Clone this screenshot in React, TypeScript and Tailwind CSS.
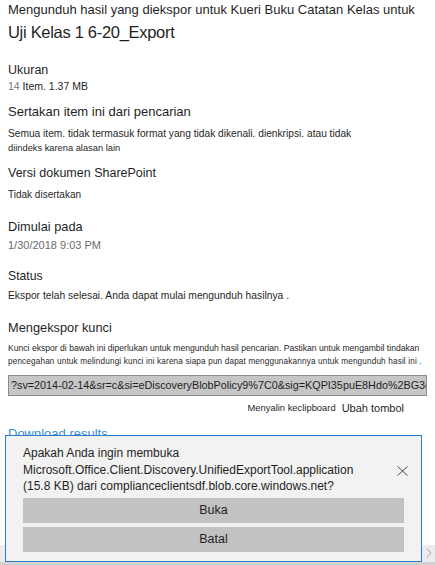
import React from "react";

const font = { fontFamily: '"Liberation Sans", Arial, sans-serif' };

type RowProps = { children: React.ReactNode; className?: string };

// One text row with a fixed height; leading equals the height so the glyphs sit centred.
function Row({ children, className = "" }: RowProps) {
  return <div className={`whitespace-nowrap text-[#1f1f1f] ${className}`}>{children}</div>;
}

export default function App() {
  return (
    <div className="relative h-[565px] w-[435px] overflow-hidden bg-white" style={font}>
      <div className="flex flex-col px-2">
        <Row className="h-[20px] text-[13px] leading-[20px]">
          Mengunduh hasil yang diekspor untuk Kueri Buku Catatan Kelas untuk
        </Row>
        <Row className="h-[24px] text-[16.5px] leading-[24px] tracking-[-0.3px]">Uji Kelas 1 6-20_Export</Row>

        <Row className="mt-[18px] h-[16px] text-[12.5px] leading-[16px]">Ukuran</Row>
        <Row className="h-[16px] text-[10.5px] leading-[16px]">
          <span className="text-[#777]">14</span> Item. 1.37 MB
        </Row>

        <Row className="mt-[10px] h-[16px] text-[13px] leading-[16px]">Sertakan item ini dari pencarian</Row>
        <Row className="mt-[7px] h-[14px] text-[10.2px] leading-[14px]">
          Semua item. tidak termasuk format yang tidak dikenali. dienkripsi. atau tidak
        </Row>
        <Row className="h-[14px] text-[9.3px] leading-[14px]">diindeks karena alasan lain</Row>

        <Row className="mt-[10px] h-[16px] text-[12.5px] leading-[16px]">Versi dokumen SharePoint</Row>
        <Row className="mt-[6px] h-[16px] text-[10px] leading-[16px]">Tidak disertakan</Row>

        <Row className="mt-[15px] h-[18px] text-[12.8px] leading-[18px]">Dimulai pada</Row>
        <Row className="mt-[1px] h-[16px] text-[11px] leading-[16px] text-[#6b6b6b]">1/30/2018 9:03 PM</Row>

        <Row className="mt-[15px] h-[16px] text-[12.2px] leading-[16px]">Status</Row>
        <Row className="mt-[4px] h-[16px] text-[10.3px] leading-[16px]">
          Ekspor telah selesai. Anda dapat mulai mengunduh hasilnya .
        </Row>

        <Row className="mt-[15px] h-[18px] text-[12.8px] leading-[18px]">Mengekspor kunci</Row>
        <Row className="mt-[4px] h-[14px] text-[8.6px] leading-[14px]">
          Kunci ekspor di bawah ini diperlukan untuk mengunduh hasil pencarian. Pastikan untuk mengambil tindakan
        </Row>
        <Row className="h-[14px] text-[8.2px] leading-[14px] tracking-[0.15px]">
          pencegahan untuk melindungi kunci ini karena siapa pun dapat menggunakannya untuk mengunduh hasil ini .
        </Row>

        <div className="mt-[6px] flex h-[21px] items-center overflow-hidden whitespace-nowrap border border-[#8c8c8c] bg-[#c6c6c6] px-[2px] text-[10.8px] text-[#1f1f1f]">
          ?sv=2014-02-14&amp;sr=c&amp;si=eDiscoveryBlobPolicy9%7C0&amp;sig=KQPI35puE8Hdo%2BG3c
        </div>

        <div className="mt-[4px] flex h-[16px] items-center justify-end gap-[6px] pr-[23px] whitespace-nowrap">
          <span className="text-[9.4px] text-[#1f1f1f]">Menyalin keclipboard</span>
          <span className="text-[11px] text-[#1f1f1f]">Ubah tombol</span>
        </div>

        <Row className="mt-[9px] h-[18px] text-[13px] leading-[18px] !text-[#3b8ed4]">Download results</Row>
      </div>

      {/* horizontal scrollbar behind the prompt */}
      <div className="absolute bottom-[3px] left-0 right-0 h-[17px] bg-[#ececec]" />
      <div className="absolute bottom-[5px] right-0 flex h-[14px] w-[13px] items-center justify-center">
        <svg width="6" height="10" viewBox="0 0 6 10">
          <path d="M1 1 L5 5 L1 9" fill="none" stroke="#a6a6a6" strokeWidth="1" />
        </svg>
      </div>
      <div className="absolute bottom-0 left-0 right-0 h-[3px] bg-[#d0d0d0]" />

      {/* download prompt */}
      <div className="absolute left-[5px] top-[435px] h-[127px] w-[417px] border border-[#2b7bd0] bg-[#f2f2f2]">
        <div className="relative pl-[17px] pt-[9px] text-[12px] leading-[16.5px] text-[#1f1f1f]">
          <div className="whitespace-nowrap">Apakah Anda ingin membuka</div>
          <div className="whitespace-nowrap">Microsoft.Office.Client.Discovery.UnifiedExportTool.application</div>
          <div className="whitespace-nowrap">(15.8 KB) dari complianceclientsdf.blob.core.windows.net?</div>
          <svg className="absolute left-[391px] top-[30px]" width="11" height="10" viewBox="0 0 11 10">
            <path d="M0.5 0.5 L10.5 9.5 M10.5 0.5 L0.5 9.5" stroke="#4a4a4a" strokeWidth="1" />
          </svg>
        </div>
        <div className="mt-[3px] flex flex-col gap-[4px] px-[17px]">
          <div className="flex h-[25px] items-center justify-center bg-[#c2c2c2] text-[12.5px] text-[#1f1f1f]">Buka</div>
          <div className="flex h-[25px] items-center justify-center bg-[#c2c2c2] text-[12.5px] text-[#1f1f1f]">Batal</div>
        </div>
      </div>
    </div>
  );
}
